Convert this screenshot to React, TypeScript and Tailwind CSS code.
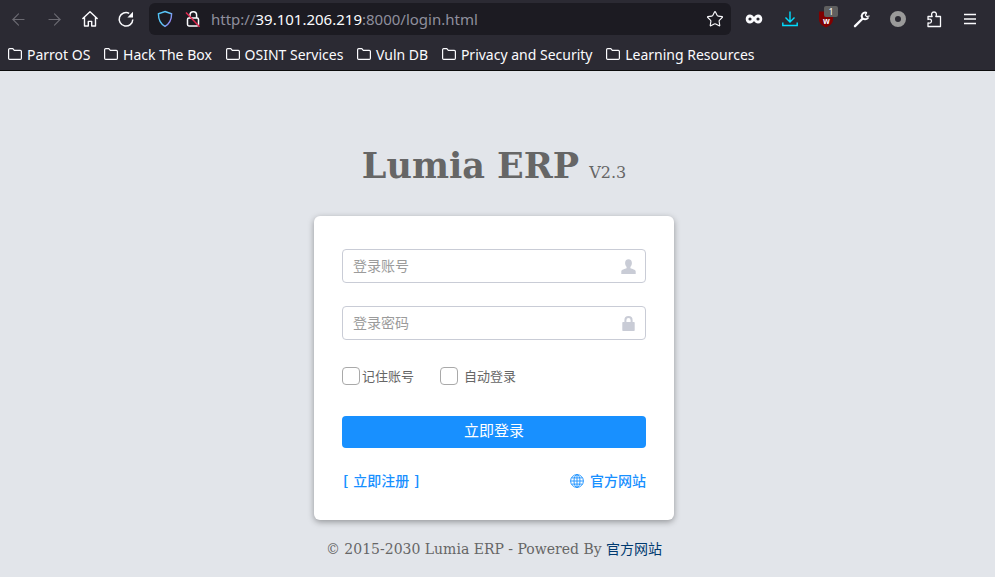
import { ArrowLeft, ArrowRight, Star } from "lucide-react";

const bookmarks = ["Parrot OS", "Hack The Box", "OSINT Services", "Vuln DB", "Privacy and Security", "Learning Resources"];

const FolderIcon = () => (
    <svg width="16" height="16" viewBox="0 0 16 16" fill="none" stroke="#fbfbfe" strokeWidth="1.2" className="shrink-0">
        <path d="M1.6 3.8c0-.6.5-1.1 1.1-1.1h3.1l1.5 1.6h6c.6 0 1.1.5 1.1 1.1v6.8c0 .6-.5 1.1-1.1 1.1H2.7c-.6 0-1.1-.5-1.1-1.1z" />
    </svg>
);

const Slot = ({ children }: { children: React.ReactNode }) => (
    <div className="flex items-center justify-center w-9 h-9 shrink-0">{children}</div>
);

const Browser = () => (
    <div className="bg-[#2b2a33] border-b border-[#0c0c0d] h-[71px] text-[#fbfbfe] font-['Noto_Sans',sans-serif]">
        {/* toolbar */}
        <div className="flex items-center h-[38px]">
            <div className="flex items-center w-[149px]">
                <Slot><ArrowLeft size={19} strokeWidth={1.4} className="text-[#6b6a72]" /></Slot>
                <Slot><ArrowRight size={19} strokeWidth={1.4} className="text-[#6b6a72]" /></Slot>
                <Slot>
                    {/* home */}
                    <svg width="18" height="18" viewBox="0 0 18 18" fill="none" stroke="#fbfbfe" strokeWidth="1.4" strokeLinejoin="round" strokeLinecap="round">
                        <path d="M1.800 8.600 9 1.800l7.200 6.800M3.500 7.200V16h3.800v-4.600h3.400V16h3.800V7.200" />
                    </svg>
                </Slot>
                <Slot>
                    {/* reload */}
                    <svg width="18" height="18" viewBox="0 0 18 18" fill="none" stroke="#fbfbfe" strokeWidth="1.5">
                        <path d="M15.800 9.500A6.800 6.800 0 1 1 12.200 3.300" />
                        <path d="M16 1.800v5.600h-5.600z" fill="#fbfbfe" stroke="none" />
                    </svg>
                </Slot>
            </div>
            {/* url bar */}
            <div className="flex items-center w-[582px] h-8 rounded-md bg-[#1c1b22] pl-[8px] pr-[7px]">
                <svg width="16" height="18" viewBox="0 0 16 18" fill="none" strokeWidth="1.4">
                    <defs>
                        <linearGradient id="shield" x1="0" y1="0" x2="1" y2="0.600">
                            <stop offset="0" stopColor="#4fc3f7" />
                            <stop offset="0.650" stopColor="#60c8fa" />
                            <stop offset="1" stopColor="#9a7cf0" />
                        </linearGradient>
                    </defs>
                    <path d="M8 1.500 14.600 3.800c0 6-1.600 9.800-6.600 12.600C3 13.600 1.400 9.800 1.400 3.800z" stroke="url(#shield)" />
                </svg>
                <svg width="16" height="18" viewBox="0 0 16 18" fill="none" stroke="#fbfbfe" strokeWidth="1.5" className="ml-[12px]">
                    <path d="M5 8V5a3.300 3.300 0 0 1 6.600 0v3" />
                    <rect x="2.500" y="8" width="11" height="8" rx="1.400" />
                    <path d="M1 2.500 14.500 16.800" stroke="#e22850" strokeWidth="1.500" />
                </svg>
                <div className="ml-[10px] text-[15px] whitespace-nowrap text-[#8f8f9d]">
                    http://<span className="text-[#fbfbfe]">39.101.206.219</span>:8000/login.html
                </div>
                <Star size={18} strokeWidth={1.5} className="ml-auto" />
            </div>
            {/* extensions */}
            <div className="flex items-center ml-[5px]">
                <Slot>
                    <svg width="18" height="18" viewBox="0 0 18 18" fill="#fbfbfe">
                        <path fillRule="evenodd" d="M5 4.500c1.700 0 3 1 4 2.400 1-1.400 2.300-2.400 4-2.400 2.600 0 4.300 2 4.300 4.500S15.600 13.500 13 13.500c-1.700 0-3-1-4-2.400-1 1.400-2.300 2.400-4 2.400C2.400 13.500.7 11.500.7 9S2.400 4.500 5 4.500zM5 7.400a1.600 1.600 0 1 0 0 3.200 1.600 1.600 0 0 0 0-3.200zm8 0a1.600 1.600 0 1 0 0 3.200 1.600 1.600 0 0 0 0-3.200z" />
                    </svg>
                </Slot>
                <Slot>
                    <svg width="18" height="18" viewBox="0 0 18 18" fill="none" stroke="#00ddff" strokeWidth="1.4">
                        <path d="M9 1.500v10.500M4.500 7.500 9 12l4.500-4.500M1.800 12.500v3h14.400v-3" />
                    </svg>
                </Slot>
                <Slot>
                    <div className="relative w-[18px] h-[18px]">
                        <svg width="18" height="18" viewBox="0 0 18 18">
                            <path d="M2 1.500h14v8c0 3.500-3 6.500-7 8-4-1.500-7-4.500-7-8z" fill="#800000" />
                        </svg>
                        <span className="absolute left-[6px] top-[7px] text-[8px] leading-[7px] font-bold">w</span>
                        <span className="absolute left-[7px] top-[-4px] w-[14px] h-[11px] rounded-[2px] bg-[#5f5f5f] text-[9px] leading-[11px] text-center">1</span>
                    </div>
                </Slot>
                <Slot>
                    {/* wrench */}
                    <svg width="20" height="20" viewBox="0 0 20 20" fill="none" stroke="#fbfbfe" strokeLinecap="round">
                        <path d="M3 17.200 10.200 10" strokeWidth="2.400" />
                        <path d="M14.200 3.700A3.500 3.500 0 0 0 10.200 8.800a3.500 3.500 0 0 0 5.700.2" strokeWidth="2" />
                        <path d="M14.400 3.800 13.400 6.200 14.600 7.600 17.200 7" strokeWidth="1.200" />
                    </svg>
                </Slot>
                <Slot>
                    <div className="w-4 h-4 rounded-full border-[5px] border-[#9a9a9a]" />
                </Slot>
                <Slot>
                    {/* extensions puzzle */}
                    <svg width="18" height="18" viewBox="0 0 18 18" fill="none" stroke="#fbfbfe" strokeWidth="1.3" strokeLinejoin="round">
                        <path d="M3 6.500h4.200C6 4.500 6.500 2 9 2s3 2.500 1.800 4.500h4.700v10H3V13c2.500.5 3.500-.5 3.500-2S5.500 8.500 3 9.500z" />
                    </svg>
                </Slot>
                <Slot>
                    <svg width="18" height="18" viewBox="0 0 18 18" stroke="#fbfbfe" strokeWidth="1.300">
                        <path d="M3 4.500h12M3 9h12M3 13.500h12" />
                    </svg>
                </Slot>
            </div>
        </div>
        {/* bookmarks */}
        <div className="flex items-center h-[32px] pl-[7px] gap-[12.700px] text-[14px]">
            {bookmarks.map((b) => (
                <div key={b} className="flex items-center gap-[4px] whitespace-nowrap">
                    <FolderIcon />
                    <span>{b}</span>
                </div>
            ))}
        </div>
    </div>
);

const Field = ({ placeholder, icon }: { placeholder: string; icon: React.ReactNode }) => (
    <div className="flex items-center justify-between h-[34px] rounded border border-[#c9ccd6] pl-[10px] pr-[9px] text-[14px] text-[#9b9b9b]">
        <span className="-mt-[1px]">{placeholder}</span>
        {icon}
    </div>
);

const Checkbox = () => <span className="block w-[18px] h-[18px] rounded-[4px] border border-[#a9a9a9] shrink-0" />;

const App = () => {
    return (
        <div className="w-[995px] h-[577px] overflow-hidden flex flex-col bg-[#e2e5ea] font-['DejaVu_Serif','Noto_Sans_CJK_SC',serif]">
            <Browser />
            <div className="flex flex-col items-center pt-[72px] w-[988px]">
                {/* title */}
                <div className="flex items-baseline gap-[10px] h-[46px] text-[#666666]">
                    <h1 className="text-[35px] leading-[46px] font-bold">Lumia ERP</h1>
                    <span className="text-[16px]">V2.3</span>
                </div>
                {/* login card */}
                <div className="w-[360px] h-[304px] mt-[27px] rounded-md bg-white shadow-[0_2px_6px_rgba(0,0,0,0.35)] px-[28px] pt-[33px] font-['Noto_Sans_CJK_SC',sans-serif]">
                    <Field
                        placeholder="登录账号"
                        icon={
                            <svg width="15" height="15" viewBox="0 0 15 15" fill="#c9ccd6">
                                <path d="M7.500.3c2.200 0 3.400 1.700 3.400 3.800 0 1.500-.6 3-1.500 3.800v1.300c1.700.7 5.300 1.300 5.300 3.300V15H.3v-2.500c0-2 3.600-2.600 5.300-3.300V7.900c-.9-.8-1.500-2.300-1.500-3.800C4.100 2 5.300.3 7.500.3z" />
                            </svg>
                        }
                    />
                    <div className="mt-[23px]">
                        <Field
                            placeholder="登录密码"
                            icon={
                                <svg width="15" height="15" viewBox="0 0 15 15" fill="#c9ccd6">
                                    <path fillRule="evenodd" d="M3.400 6V4.200a4.100 4.100 0 0 1 8.200 0V6h1.400c.4 0 .7.300.7.700v7.600c0 .4-.3.700-.7.700H2c-.4 0-.7-.3-.7-.7V6.700c0-.4.300-.7.700-.7zm2 0h4.200V4.200a2.100 2.100 0 0 0-4.200 0z" />
                                </svg>
                            }
                        />
                    </div>
                    <div className="flex items-center mt-[27px] h-[18px] text-[13px] text-[#666666]">
                        <Checkbox />
                        <span className="ml-[2px]">记住账号</span>
                        <span className="ml-[26px]"><Checkbox /></span>
                        <span className="ml-[6px]">自动登录</span>
                    </div>
                    <button className="block w-full h-8 mt-[31px] pb-[3px] rounded bg-[#1890ff] text-white text-[15px]">立即登录</button>
                    <div className="flex items-center justify-between mt-[22px] text-[14px] font-medium text-[#1890ff]">
                        <span className="flex items-center gap-[5px] pl-[1px]">
                            <b className="font-bold">[</b>
                            <span>立即注册</span>
                            <b className="font-bold">]</b>
                        </span>
                        <span className="flex items-center gap-[6px]">
                            <svg width="14" height="14" viewBox="0 0 14 14" fill="none" stroke="#1890ff" strokeWidth="0.900">
                                <circle cx="7" cy="7" r="6.400" />
                                <ellipse cx="7" cy="7" rx="3" ry="6.400" />
                                <path d="M7 .6v12.800M.6 7h12.800M1.500 3.900h11M1.500 10.100h11" />
                            </svg>
                            官方网站
                        </span>
                    </div>
                </div>
                {/* footer */}
                <p className="mt-[19px] text-[14px] text-[#666666]">
                    © 2015-2030 Lumia ERP - Powered By <span className="text-[#003a70]">官方网站</span>
                </p>
            </div>
        </div>
    );
};

export default App;
